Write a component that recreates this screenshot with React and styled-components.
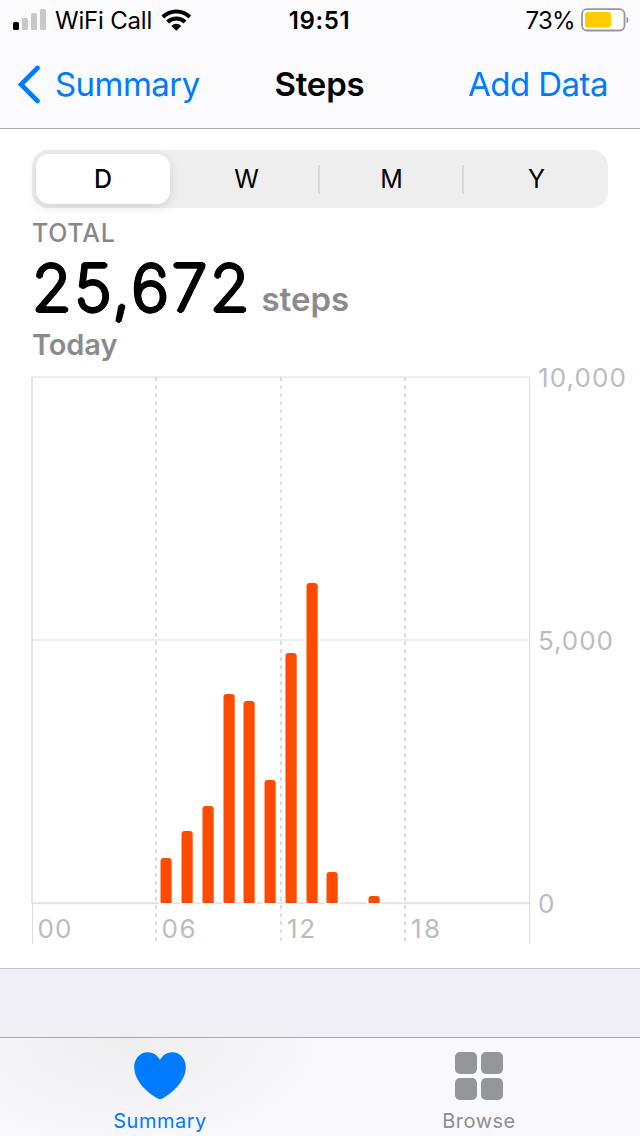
import React from "react";
import styled, { createGlobalStyle, css } from "styled-components";

const GlobalStyle = createGlobalStyle`
  * {
    box-sizing: border-box;
  }

  body {
    margin: 0;
    background: #ffffff;
    font-family: Inter, "Liberation Sans", sans-serif;
    color: #000000;
  }
`;

const ranges = ["D", "W", "M", "Y"];

// x offset, top of the bar (steps are drawn down to the 0 line)
const bars = [
  { x: 160.5, top: 858 },
  { x: 181.5, top: 831 },
  { x: 202.5, top: 806 },
  { x: 223.5, top: 694 },
  { x: 243.5, top: 701 },
  { x: 264.5, top: 780 },
  { x: 285.5, top: 653 },
  { x: 306.5, top: 583 },
  { x: 326.5, top: 872 },
  { x: 368.5, top: 896 },
];

const hours = [
  { x: 37.5, label: "00", w: 34 },
  { x: 161.5, label: "06", w: 34 },
  { x: 287, label: "12", w: 28 },
  { x: 411, label: "18", w: 29 },
];

const levels = [
  { y: 387, label: "10,000", w: 88 },
  { y: 650, label: "5,000", w: 75 },
  { y: 913, label: "0", w: 16 },
];

const barPath = ({ x, top }) =>
  `M${x} 903V${top + 3}q0-3 3-3h5.2q3 0 3 3V903z`;

const SignalIcon = () => (
  <svg width="34" height="22" viewBox="0 0 34 22">
    <rect x="0" y="13" width="6" height="8" rx="1.5" fill="#000" />
    <rect x="9" y="9" width="6" height="12" rx="1.5" fill="#c8c8ca" />
    <rect x="18" y="4" width="6" height="17" rx="1.5" fill="#c8c8ca" />
    <rect x="27" y="0" width="6" height="21" rx="1.5" fill="#c8c8ca" />
  </svg>
);

const WifiIcon = () => (
  <svg width="32" height="22" viewBox="0 0 32 22" fill="none" stroke="#000" strokeWidth="4">
    <path d="M2.8 8A19.4 19.4 0 0 1 29.8 8" />
    <path d="M7.6 13A12.4 12.4 0 0 1 25 13" />
    <path d="M11.4 16.9a6.8 6.8 0 0 1 9.8 0L16.3 21.7z" fill="#000" stroke="none" />
  </svg>
);

const BatteryIcon = () => (
  <svg width="48" height="24" viewBox="0 0 48 24">
    <rect x="1" y="1.2" width="42.5" height="21.3" rx="5" fill="#fff" stroke="#98989b" strokeWidth="1.8" />
    <rect x="4" y="4" width="26" height="15.4" rx="2.6" fill="#fc0" />
    <path d="M45.5 8.5c2.6 1.2 2.6 5.6 0 6.8z" fill="#98989b" />
  </svg>
);

const Chevron = () => (
  <svg width="24" height="40" viewBox="0 0 24 40">
    <path d="M21.5 4L5 20.5L21.5 37" fill="none" stroke="#007aff" strokeWidth="4.6" strokeLinecap="round" strokeLinejoin="miter" />
  </svg>
);

const HeartIcon = () => (
  <svg width="52" height="48" viewBox="0 0 52 48">
    <path d="M26 7.8C23.3 3 18.8.2 14 .2C6 .2.2 6.5.2 15.2C.2 26.5 9 37 21.5 45.3C23.5 46.6 24.9 47.2 26 47.2C27.1 47.2 28.5 46.6 30.5 45.3C43 37 51.8 26.5 51.8 15.2C51.8 6.5 46 .2 38 .2C33.2.2 28.7 3 26 7.8z" fill="#007aff" />
  </svg>
);

const BrowseIcon = () => (
  <svg width="48" height="48" viewBox="0 0 48 48" fill="#959699">
    <rect width="22" height="22" rx="5" />
    <rect x="26" width="22" height="22" rx="5" />
    <rect y="26" width="22" height="22" rx="5" />
    <rect x="26" y="26" width="22" height="22" rx="5" />
  </svg>
);

const StepsChart = () => (
  <Chart width="640" height="584" viewBox="0 361 640 584">
    <g fill="none" strokeWidth="2">
      <path d="M32 377H529" stroke="#ededee" />
      <path d="M32 640H529" stroke="#eeeeef" />
      <path d="M32 903.2H529" stroke="#e2e2e3" />
      <path d="M32 377V903" stroke="#dededf" strokeWidth="1.7" />
      <path d="M32.5 903V944M529.5 377V944" stroke="#dededf" strokeWidth="1" />
      <path d="M156 377V943M281 377V943M405 377V943" stroke="#dcdcde" strokeDasharray="4 4" />
    </g>
    {bars.map((bar) => (
      <path
        key={bar.x}
        d={barPath(bar)}
        fill="#ff4b00"
        stroke="#fff"
        strokeWidth="4"
        paintOrder="stroke"
      />
    ))}
    {hours.map((h) => (
      <AxisText key={h.label} x={h.x} y="938" textLength={h.w}>
        {h.label}
      </AxisText>
    ))}
    {levels.map((l) => (
      <AxisText key={l.label} x="538" y={l.y} textLength={l.w}>
        {l.label}
      </AxisText>
    ))}
  </Chart>
);

const App = () => {
  return (
    <Screen>
      <GlobalStyle />
      <Header>
        <StatusBar>
          <Carrier>
            <SignalIcon />
            <span>WiFi Call</span>
            <WifiIcon />
          </Carrier>
          <Clock>19:51</Clock>
          <Power>
            <span>73%</span>
            <BatteryIcon />
          </Power>
        </StatusBar>
        <NavBar>
          <NavButton>
            <Chevron />
            <span>Summary</span>
          </NavButton>
          <Title>Steps</Title>
          <NavButton $end>Add Data</NavButton>
        </NavBar>
      </Header>

      <Content>
        <Segments>
          {ranges.map((r, i) => (
            <Segment key={r} $active={i === 0} $divider={i > 1}>
              {r}
            </Segment>
          ))}
        </Segments>
        <Caption>TOTAL</Caption>
        <Total>
          <Count>25,672</Count>
          <Unit>steps</Unit>
        </Total>
        <Day>Today</Day>
        <StepsChart />
      </Content>

      <Spacer />

      <TabBar>
        <Tab $active>
          <HeartIcon />
          <span>Summary</span>
        </Tab>
        <Tab>
          <BrowseIcon />
          <span>Browse</span>
        </Tab>
      </TabBar>
    </Screen>
  );
};

const Screen = styled.div`
  width: 640px;
  height: 1136px;
  display: flex;
  flex-direction: column;
  overflow: hidden;
  background: #ffffff;
`;

const Header = styled.header`
  height: 129px;
  background: #fbfbfe;
  border-bottom: 1px solid #b0b0b3;
`;

const StatusBar = styled.div`
  height: 40px;
  padding: 0 11px 0 13px;
  display: grid;
  grid-template-columns: 1fr auto 1fr;
  align-items: center;
  font-size: 24px;
`;

const Carrier = styled.div`
  display: flex;
  align-items: center;
  gap: 8px;
  letter-spacing: -0.2px;
`;

const Clock = styled.div`
  font-weight: 600;
  font-size: 24px;
  letter-spacing: 0.6px;
  padding-right: 3px;
`;

const Power = styled.div`
  display: flex;
  align-items: center;
  justify-content: flex-end;
  gap: 6px;
  letter-spacing: -0.7px;
`;

const NavBar = styled.nav`
  height: 88px;
  padding: 0 32px 0 16px;
  display: grid;
  grid-template-columns: 1fr auto 1fr;
  align-items: center;
`;

const NavButton = styled.div`
  display: flex;
  align-items: center;
  justify-content: ${(props) => (props.$end ? "flex-end" : "flex-start")};
  gap: 15px;
  font-size: 33px;
  letter-spacing: -0.55px;
  color: #007aff;
`;

const Title = styled.h1`
  margin: 0;
  padding-left: 15px;
  font-size: 33px;
  font-weight: 600;
  letter-spacing: -0.2px;
`;

const Content = styled.main`
  height: 840px;
  padding: 21px 32px 0;
  border-bottom: 1px solid #c3c3c6;
`;

const Segments = styled.div`
  height: 58px;
  padding: 4px 0 4px 4px;
  display: grid;
  grid-template-columns: 134px 148px 144px 1fr;
  align-items: center;
  border-radius: 16px;
  background: #eeeeef;
`;

const Segment = styled.div`
  height: 29px;
  display: flex;
  align-items: center;
  justify-content: center;
  font-size: 25px;
  font-weight: 400;
  padding-left: 5px;
  ${(props) =>
    props.$divider &&
    css`
      padding-left: 1px;
      border-left: 2px solid #d8d8da;
    `}
  ${(props) =>
    props.$active &&
    css`
      height: 50px;
      padding-left: 0;
      font-weight: 500;
      border-radius: 13px;
      background: #ffffff;
      box-shadow: 0 3px 12px rgba(0, 0, 0, 0.12);
    `}
`;

const Caption = styled.div`
  margin-top: 9px;
  height: 32px;
  line-height: 32px;
  font-size: 25px;
  font-weight: 500;
  letter-spacing: 0.7px;
  color: #88888c;
`;

const Total = styled.div`
  height: 80px;
  display: flex;
  align-items: baseline;
  gap: 9px;
`;

// thin digits thickened on every side, which rounds their ends
const Count = styled.span`
  font-size: 64px;
  line-height: 78px;
  font-weight: 200;
  letter-spacing: 2.9px;
  text-shadow: 2px 0 0 #000, -2px 0 0 #000, 0 2px 0 #000, 0 -2px 0 #000,
    1.4px 1.4px 0 #000, -1.4px 1.4px 0 #000, 1.4px -1.4px 0 #000,
    -1.4px -1.4px 0 #000, 1px 0 0 #000, -1px 0 0 #000;
`;

const Unit = styled.span`
  font-size: 33px;
  font-weight: 600;
  color: #8b8b8f;
`;

const Day = styled.div`
  height: 32px;
  line-height: 32px;
  font-size: 29px;
  font-weight: 600;
  letter-spacing: -0.1px;
  color: #8b8b8f;
`;

const Chart = styled.svg`
  display: block;
  margin-left: -32px;
`;

const AxisText = styled.text`
  font-size: 26px;
  font-weight: 400;
  fill: #bcbcbe;
`;

const Spacer = styled.div`
  height: 68px;
  background: #f0eff5;
`;

const TabBar = styled.footer`
  height: 99px;
  display: grid;
  grid-template-columns: 1fr 1fr;
  border-top: 1px solid #a7a7ab;
  background: radial-gradient(ellipse 200px 110px at 125px 0, #eeeeef, rgba(238, 238, 239, 0)),
    #f9f9fd;
`;

const Tab = styled.div`
  padding-top: 14px;
  display: flex;
  flex-direction: column;
  align-items: center;
  font-size: 20px;
  font-weight: 400;
  letter-spacing: 0.5px;
  color: ${(props) => (props.$active ? "#007aff" : "#8e8f92")};

  svg {
    height: 48px;
    margin-bottom: 9px;
  }

  &:last-child {
    padding-right: 2px;
  }
`;

export default App;
